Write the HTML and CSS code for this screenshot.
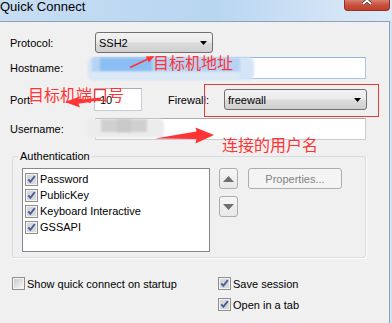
FILE: index.html
```html
<!DOCTYPE html>
<html>
<head>
<meta charset="utf-8">
<link rel="stylesheet" href="styles.css">
</head>
<body>
<div class="titlebar">
  <span class="title">Quick Connect</span>
  <div class="close">
    <svg width="46" height="12" viewBox="0 0 46 12"><path d="M19 -2 L27 5 M27 -2 L19 5" stroke="#3a2a2a" stroke-width="3.4" fill="none"/><path d="M19 -2 L27 5 M27 -2 L19 5" stroke="#fff" stroke-width="2" fill="none"/></svg>
  </div>
</div>
<div class="window">
  <div class="row r1">
    <span class="lbl">Protocol:</span>
    <div class="select sel-proto"><span>SSH2</span><svg class="caret" width="7" height="4" viewBox="0 0 7 4"><path d="M0 0H7L3.5 4Z" fill="#000"/></svg></div>
  </div>
  <div class="row r2">
    <span class="lbl">Hostname:</span>
    <div class="input input-host"></div>
  </div>
  <div class="row r3">
    <span class="lbl lbl-port">Port:</span>
    <div class="input input-port"><span>10</span></div>
    <span class="lbl lbl-fw">Firewall:</span>
    <div class="select sel-fw"><span>freewall</span><svg class="caret" width="7" height="4" viewBox="0 0 7 4"><path d="M0 0H7L3.5 4Z" fill="#000"/></svg></div>
  </div>
  <div class="row r4">
    <span class="lbl">Username:</span>
    <div class="input input-user"></div>
  </div>
  <fieldset class="auth">
    <legend>Authentication</legend>
    <div class="listbox">
      <div class="item"><svg class="cb" width="13" height="13" viewBox="0 0 13 13"><rect x="0.5" y="0.5" width="12" height="12" fill="#f3f3f3" stroke="#8e8f8f"/><rect x="2" y="2" width="9" height="9" fill="#d8d8d8"/><path d="M3.2 6.3 L5.4 8.8 L9.8 3.2" stroke="#46609e" stroke-width="1.9" fill="none"/></svg><span>Password</span></div>
      <div class="item"><svg class="cb" width="13" height="13" viewBox="0 0 13 13"><rect x="0.5" y="0.5" width="12" height="12" fill="#f3f3f3" stroke="#8e8f8f"/><rect x="2" y="2" width="9" height="9" fill="#d8d8d8"/><path d="M3.2 6.3 L5.4 8.8 L9.8 3.2" stroke="#46609e" stroke-width="1.9" fill="none"/></svg><span>PublicKey</span></div>
      <div class="item"><svg class="cb" width="13" height="13" viewBox="0 0 13 13"><rect x="0.5" y="0.5" width="12" height="12" fill="#f3f3f3" stroke="#8e8f8f"/><rect x="2" y="2" width="9" height="9" fill="#d8d8d8"/><path d="M3.2 6.3 L5.4 8.8 L9.8 3.2" stroke="#46609e" stroke-width="1.9" fill="none"/></svg><span>Keyboard Interactive</span></div>
      <div class="item"><svg class="cb" width="13" height="13" viewBox="0 0 13 13"><rect x="0.5" y="0.5" width="12" height="12" fill="#f3f3f3" stroke="#8e8f8f"/><rect x="2" y="2" width="9" height="9" fill="#d8d8d8"/><path d="M3.2 6.3 L5.4 8.8 L9.8 3.2" stroke="#46609e" stroke-width="1.9" fill="none"/></svg><span>GSSAPI</span></div>
    </div>
    <div class="arrows">
      <div class="abtn"><svg width="11" height="6" viewBox="0 0 11 6"><path d="M0 6H11L5.5 0Z" fill="#6f6f6f"/></svg></div>
      <div class="abtn"><svg width="11" height="6" viewBox="0 0 11 6"><path d="M0 0H11L5.5 6Z" fill="#6f6f6f"/></svg></div>
    </div>
    <div class="props">Properties...</div>
  </fieldset>
  <div class="options">
    <div class="opt"><svg class="cb" width="13" height="13" viewBox="0 0 13 13"><defs><linearGradient id="g1" x1="0" y1="0" x2="1" y2="1"><stop offset="0" stop-color="#cbcbcb"/><stop offset="1" stop-color="#f6f6f6"/></linearGradient></defs><rect x="0.5" y="0.5" width="12" height="12" fill="#f3f3f3" stroke="#8e8f8f"/><rect x="2" y="2" width="9" height="9" fill="url(#g1)"/></svg><span>Show quick connect on startup</span></div>
    <div class="opt"><svg class="cb" width="13" height="13" viewBox="0 0 13 13"><rect x="0.5" y="0.5" width="12" height="12" fill="#f3f3f3" stroke="#8e8f8f"/><rect x="2" y="2" width="9" height="9" fill="#d8d8d8"/><path d="M3.2 6.3 L5.4 8.8 L9.8 3.2" stroke="#46609e" stroke-width="1.9" fill="none"/></svg><span>Save session</span></div>
    <div class="opt empty"></div>
    <div class="opt"><svg class="cb" width="13" height="13" viewBox="0 0 13 13"><rect x="0.5" y="0.5" width="12" height="12" fill="#f3f3f3" stroke="#8e8f8f"/><rect x="2" y="2" width="9" height="9" fill="#d8d8d8"/><path d="M3.2 6.3 L5.4 8.8 L9.8 3.2" stroke="#46609e" stroke-width="1.9" fill="none"/></svg><span>Open in a tab</span></div>
  </div>
</div>

<!-- blurred (redacted) values -->
<div class="blur blur-host">
  <span class="b b1"></span><span class="b b2"></span><span class="b b3"></span><span class="b b4"></span>
</div>
<div class="blur blur-user">
  <span class="b u1"></span><span class="b u2"></span><span class="b u3"></span>
</div>

<!-- annotations -->
<div class="note note-host">目标机地址</div>
<div class="note note-port">目标机端口号</div>
<div class="note note-user">连接的用户名</div>
<div class="redbox"></div>
<svg class="arrows-overlay" width="392" height="323" viewBox="0 0 392 323">
  <path d="M130 67.5 L147.5 59.2" stroke="#f33" stroke-width="1.6" fill="none"/>
  <polygon points="154.5,56 145.8,56.6 148.8,62.6" fill="#f33"/>
  <polygon points="65,102 80,96.5 78.5,100 101,97.5 101,99.8 78.5,103.8 80,107.5" fill="#f33"/>
  <polygon points="155,138.5 196.5,131.5 195.5,127.5 214,135 195.5,143.5 196.5,139" fill="#f33"/>
</svg>
</body>
</html>
```

FILE: styles.css
```css
html, body {
  margin: 0;
  padding: 0;
}
body {
  width: 392px;
  height: 323px;
  overflow: hidden;
  position: relative;
  background: #cfe2f5;
  font-family: "Liberation Sans", Arial, sans-serif;
  font-size: 11px;
  color: #000;
}
.titlebar {
  height: 21px;
  position: relative;
  background: linear-gradient(90deg, #c7ddf3 0%, #bdd8f1 35%, #b9d6f1 55%, #cfe2f5 80%, #dbe9f7 100%);
}
.title {
  display: block;
  font-size: 13px;
  line-height: 13px;
  padding-top: 0;
  color: #000;
}
.close {
  position: absolute;
  left: 344px;
  top: -1px;
  width: 46px;
  height: 12px;
  box-sizing: border-box;
  border: 1px solid #8c3326;
  border-top: none;
  border-radius: 0 0 4px 4px;
  background: linear-gradient(#d98b7c, #c9503c 55%, #c0402c);
  overflow: hidden;
}
.close svg {
  position: absolute;
  left: -1px;
  top: 0;
}
.window {
  box-sizing: border-box;
  width: 390px;
  height: 302px;
  background: #f0f0f0;
  border-top: 1px solid #8fa2b6;
  border-right: 1px solid #8fa2b6;
  padding-left: 10px;
  padding-top: 10px;
}
.row {
  display: flex;
  align-items: center;
}
.r1 { height: 21px; }
.r2 { height: 22px; margin-top: 4px; }
.r3 { height: 23px; margin-top: 9px; }
.r4 { height: 22px; margin-top: 7px; }
.lbl {
  width: 85px;
  flex: none;
}
.lbl-port { width: 84px; }
.lbl-fw { width: 56px; margin-left: 26px; }
.select {
  box-sizing: border-box;
  height: 21px;
  border: 1px solid #707070;
  border-radius: 3px;
  background: linear-gradient(#f3f3f3, #ebebeb 48%, #dcdcdc 52%, #cfcfcf);
  display: flex;
  align-items: center;
  justify-content: space-between;
  padding: 0 5px 0 3px;
  flex: none;
}
.sel-proto { width: 118px; }
.sel-fw { width: 143px; padding-left: 3px; }
.input {
  box-sizing: border-box;
  background: #fff;
  border: 1px solid #c9ccd3;
  border-top-color: #abadb3;
  flex: none;
  display: flex;
  align-items: center;
}
.input-host {
  width: 271px;
  height: 22px;
  border-color: #a9c8e8;
  border-top-color: #8db6e2;
}
.input-port {
  width: 48px;
  height: 23px;
  padding-left: 5px;
}
.input-user {
  width: 271px;
  height: 22px;
}
.auth {
  box-sizing: border-box;
  width: 354px;
  margin: 10px 0 0 2px;
  padding: 0 6px 5px 9px;
  border: 1px solid #d5dbe0;
  border-radius: 3px;
  box-shadow: 1px 1px 0 #fff;
  display: flex;
  align-items: flex-start;
  min-width: 0;
}
.auth legend {
  padding: 0 2px;
  margin-left: -4px;
  line-height: 13px;
}
.listbox {
  box-sizing: border-box;
  width: 188px;
  height: 84px;
  margin-top: 5px;
  background: #fff;
  border: 1px solid #828790;
  padding: 2px 0 0 2px;
}
.item {
  height: 16px;
  display: flex;
  align-items: center;
  gap: 2px;
}
.cb {
  display: block;
  flex: none;
}
.arrows {
  margin-left: 9px;
  margin-top: 5px;
  display: flex;
  flex-direction: column;
  gap: 7px;
}
.abtn {
  box-sizing: border-box;
  width: 19px;
  height: 21px;
  border: 1px solid #adadad;
  border-radius: 3px;
  background: linear-gradient(#f6f6f6, #e8e8e8);
  display: flex;
  align-items: center;
  justify-content: center;
}
.props {
  box-sizing: border-box;
  margin-left: 10px;
  margin-top: 5px;
  width: 94px;
  height: 21px;
  border: 1px solid #adadad;
  border-radius: 3px;
  background: #f4f4f4;
  color: #838383;
  display: flex;
  align-items: center;
  justify-content: center;
}
.options {
  display: grid;
  grid-template-columns: 206px auto;
  row-gap: 8px;
  margin-top: 19px;
  padding-left: 2px;
}
.opt {
  height: 13px;
  display: flex;
  align-items: center;
  gap: 2px;
}
.blur {
  position: absolute;
  pointer-events: none;
}
.b {
  position: absolute;
  display: block;
  filter: blur(1.2px);
}
.blur-host { left: 0; top: 0; }
.b1 { left: 88px; top: 57px; width: 166px; height: 23px; background: #d4e5f7; border-radius: 6px; }
.b2 { left: 92px; top: 58px; width: 148px; height: 14px; background: #b4d3f5; }
.b3 { left: 100px; top: 58px; width: 52px; height: 13px; background: #8bbef3; }
.b4 { left: 90px; top: 72px; width: 150px; height: 7px; background: #dbe8f6; }
.blur-user { left: 0; top: 0; }
.u1 { left: 86px; top: 119px; width: 78px; height: 19px; background: #ececec; border-radius: 5px; }
.u2 { left: 101px; top: 119px; width: 46px; height: 13px; background: #d0d0d0; }
.u3 { left: 117px; top: 119px; width: 14px; height: 13px; background: #c9c9c9; }
.note {
  position: absolute;
  font-family: "Noto Sans CJK SC", "Noto Sans", sans-serif;
  font-size: 16px;
  line-height: 16px;
  color: #f33;
  white-space: nowrap;
}
.note-host { left: 153px; top: 54px; }
.note-port { left: 28px; top: 86px; }
.note-user { left: 222px; top: 136px; }
.redbox {
  position: absolute;
  left: 204px;
  top: 84px;
  width: 173px;
  height: 31px;
  border: 1px solid #e83a3a;
}
.arrows-overlay {
  position: absolute;
  left: 0;
  top: 0;
  pointer-events: none;
}
```
